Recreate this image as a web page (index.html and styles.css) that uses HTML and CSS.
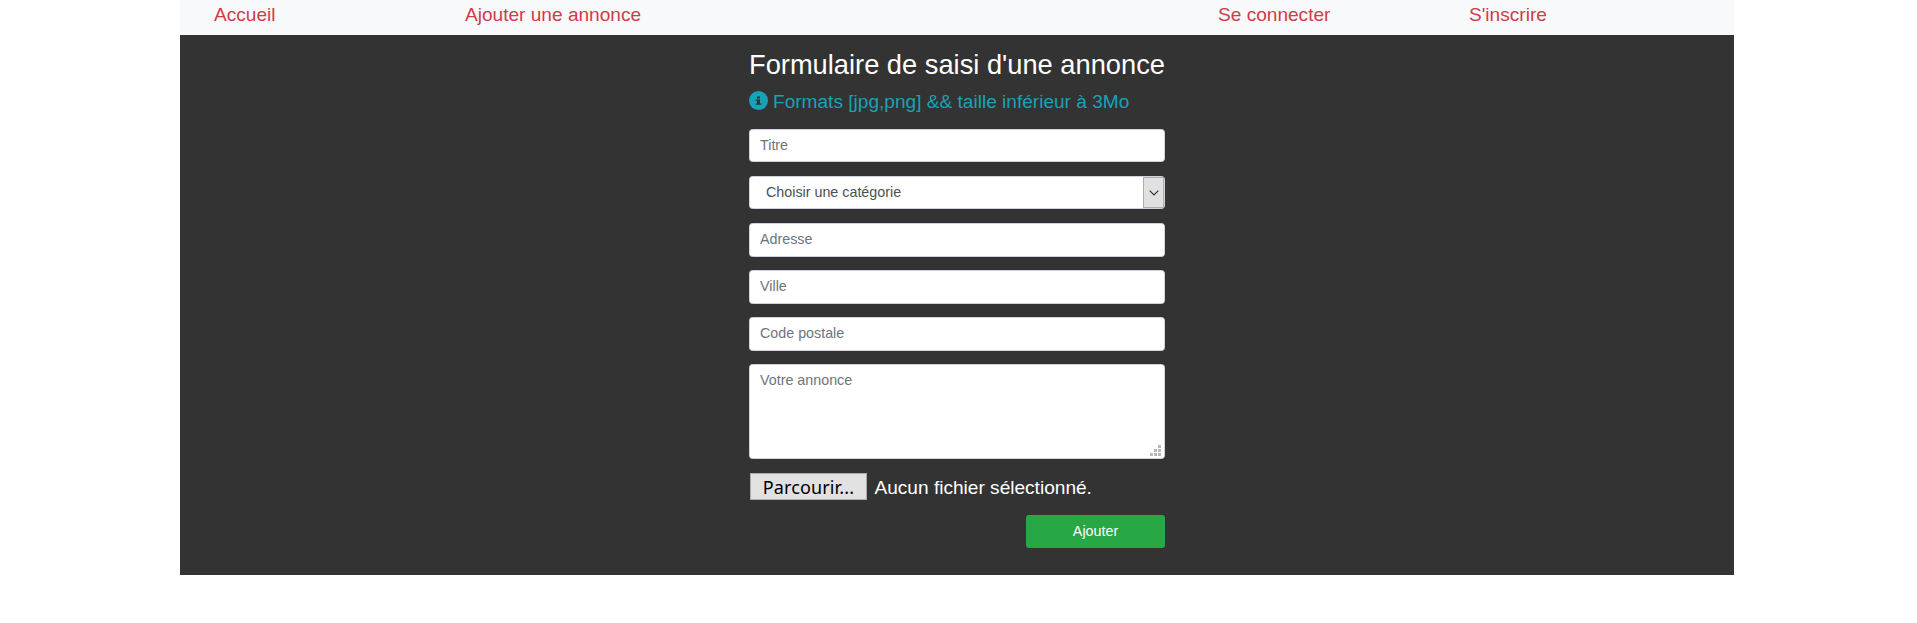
FILE: index.html
```html
<!DOCTYPE html>
<html lang="fr">
<head>
<meta charset="utf-8">
<title>Ajouter une annonce</title>
<link rel="stylesheet" href="styles.css">
</head>
<body>
<div class="page">
  <nav class="nav">
    <a class="nav-link">Accueil</a>
    <a class="nav-link">Ajouter une annonce</a>
    <a class="nav-link">Se connecter</a>
    <a class="nav-link">S'inscrire</a>
  </nav>
  <main class="content">
    <form class="form">
      <h1 class="title">Formulaire de saisi d'une annonce</h1>
      <p class="hint">
        <svg class="hint-icon" viewBox="0 0 19 19"><circle cx="9.5" cy="9.5" r="9.5" fill="#17a2b8"/><path fill="#333" d="M8 5.6h3v1.8H8zM6.6 8.4H11v4H12.4V13.8H6.6v-1.4H8V9.8H6.6z"/></svg>
        <span>Formats [jpg,png] &amp;&amp; taille inférieur à 3Mo</span>
      </p>
      <input class="field field-short" type="text" placeholder="Titre">
      <div class="field field-short select">
        <span class="select-value">Choisir une catégorie</span>
        <span class="select-button"><svg class="chevron" viewBox="0 0 10 6"><path d="M0.7 0.7 5 5 9.3 0.7" fill="none" stroke="#333" stroke-width="1.2"/></svg></span>
      </div>
      <input class="field" type="text" placeholder="Adresse">
      <input class="field" type="text" placeholder="Ville">
      <input class="field" type="text" placeholder="Code postale">
      <div class="area-wrap">
        <textarea class="field area" placeholder="Votre annonce"></textarea>
        <svg class="grip" viewBox="0 0 11 11"><path fill="#b8b8b8" d="M8 0h3v3H8zM4 4h3v3H4zM8 4h3v3H8zM0 8h3v3H0zM4 8h3v3H4zM8 8h3v3H8z"/></svg>
      </div>
      <div class="file">
        <button class="file-button" type="button">Parcourir...</button>
        <span class="file-name">Aucun fichier sélectionné.</span>
      </div>
      <button class="submit" type="button">Ajouter</button>
    </form>
  </main>
</div>
</body>
</html>
```
FILE: styles.css
```css
* { box-sizing: border-box; }
body {
  margin: 0;
  background: #fff;
  font-family: "Liberation Sans", Arial, sans-serif;
  font-size: 19.08px;
}
.page { width: 1554px; margin-left: 180px; }
.nav {
  display: grid;
  grid-template-columns: 251px 753px 251px 1fr;
  height: 35px;
  padding-left: 34px;
  background: #f8f9fa;
  color: #d03b4a;
  line-height: 29px;
}
.content {
  display: flex;
  justify-content: center;
  height: 540px;
  padding-top: 14px;
  background: #333;
}
.form { display: flex; flex-direction: column; width: 416px; }
.title {
  margin: 0;
  color: #fff;
  font-size: 27.27px;
  font-weight: 400;
  line-height: 32px;
  white-space: nowrap;
}
.hint {
  display: flex;
  align-items: center;
  gap: 5px;
  height: 29px;
  margin: 6px 0 13px;
  color: #17a2b8;
  white-space: nowrap;
}
.hint-icon { width: 19px; height: 19px; margin-bottom: 2px; }
.field {
  width: 100%;
  height: 34px;
  margin: 0 0 13px;
  padding: 0 10px 2px;
  border: 1px solid #ced4da;
  border-radius: 3.5px;
  background: #fff;
  color: #495057;
  font-family: inherit;
  font-size: 14.3px;
}
.field-short { height: 33px; margin-bottom: 14px; padding-bottom: 1px; }
.field::placeholder { color: #6c757d; opacity: 1; }
.select {
  display: flex;
  align-items: center;
  justify-content: space-between;
  padding: 0 0 0 16px;
}
.select-value { padding-bottom: 1px; }
.select-button {
  display: flex;
  align-items: center;
  justify-content: center;
  width: 21px;
  height: 31px;
  border: 1px solid #adadad;
  background: #e1e1e1;
}
.chevron { width: 10px; height: 6px; }
.area-wrap { position: relative; height: 109px; }
.area {
  display: block;
  height: 95px;
  padding: 7px 10px;
  resize: none;
}
.grip { position: absolute; right: 4px; bottom: 17px; width: 11px; height: 11px; }
.file {
  display: flex;
  align-items: center;
  gap: 7.5px;
  height: 27px;
  padding-left: 1px;
  color: #fff;
}
.file-name { padding-top: 2px; }
.file-button {
  width: 117px;
  height: 27px;
  padding: 1px 0 0;
  border: 1px solid #adadad;
  background: #e1e1e1;
  color: #000;
  font-family: "Noto Sans", sans-serif;
  font-size: 18px;
  letter-spacing: 0.12px;
  line-height: 24px;
}
.submit {
  align-self: flex-end;
  width: 139px;
  height: 33px;
  margin-top: 15px;
  padding: 0 0 2px;
  border: 0;
  border-radius: 3px;
  background: #28a745;
  color: #fff;
  font-family: inherit;
  font-size: 14.3px;
}
```
